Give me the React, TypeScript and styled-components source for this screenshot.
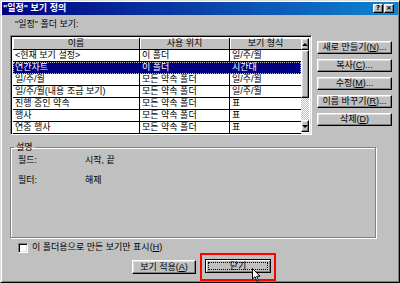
import React from 'react';
import styled, { createGlobalStyle, css } from 'styled-components';

const GlobalStyle = createGlobalStyle`
  html, body {
    margin: 0;
    padding: 0;
    background: #c0c0c0;
  }
  body {
    font-family: "Liberation Sans", "Noto Sans CJK KR", sans-serif;
    font-size: 9px;
    color: #000;
  }
  * {
    box-sizing: border-box;
  }
`;

const raised = css`
  background: #c0c0c0;
  border: 1px solid;
  border-color: #fff #000 #000 #fff;
  box-shadow: inset -1px -1px 0 #808080, inset 1px 1px 0 #dfdfdf;
`;

const sunken = css`
  border: 1px solid;
  border-color: #808080 #fff #fff #808080;
  box-shadow: inset 1px 1px 0 #000, inset -1px -1px 0 #dfdfdf;
`;

const columns = [127, 90, 71];

type View = {
  name: string;
  place: string;
  kind: string;
  selected?: boolean;
};

const views: View[] = [
  { name: '<현재 보기 설정>', place: '이 폴더', kind: '일/주/월' },
  { name: '연간차트', place: '이 폴더', kind: '시간대', selected: true },
  { name: '일/주/월', place: '모든 약속 폴더', kind: '일/주/월' },
  { name: '일/주/월(내용 조금 보기)', place: '모든 약속 폴더', kind: '일/주/월' },
  { name: '진행 중인 약속', place: '모든 약속 폴더', kind: '표' },
  { name: '행사', place: '모든 약속 폴더', kind: '표' },
  { name: '연중 행사', place: '모든 약속 폴더', kind: '표' },
];

const Window = styled.div`
  width: 400px;
  height: 283px;
  display: flex;
  flex-direction: column;
  padding: 1px;
  background: #c0c0c0;
  border: 1px solid;
  border-color: #dfdfdf #000 #000 #dfdfdf;
  box-shadow: inset 1px 1px 0 #fff, inset -1px -1px 0 #808080;
`;

const TitleBar = styled.div`
  height: 13px;
  display: flex;
  align-items: center;
  padding: 0 4px 0 1px;
  background: linear-gradient(to right, #000080, #1084d0);
  color: #fff;
`;

const TitleText = styled.span`
  flex: 1;
  font-weight: bold;
  line-height: 13px;
  white-space: nowrap;
`;

const TitleButtons = styled.div`
  display: flex;
  gap: 1px;
`;

const CaptionButton = styled.div`
  ${raised};
  width: 10px;
  height: 9px;
  display: flex;
  align-items: center;
  justify-content: center;
  color: #000;
  font-family: "DejaVu Sans", sans-serif;
  font-weight: bold;
  font-size: 7px;
  line-height: 7px;
`;

const Body = styled.div`
  flex: 1;
  display: flex;
  flex-direction: column;
  padding: 0 6px 0 8px;
`;

const Caption = styled.div`
  margin: 4px 0 0 5px;
  line-height: 11px;
`;

const TopSection = styled.div`
  display: flex;
  gap: 5px;
  margin-top: 5px;
`;

const ListView = styled.div`
  ${sunken};
  width: 302px;
  height: 100px;
  padding: 2px;
  display: flex;
  background: #fff;
`;

const ListArea = styled.div`
  width: 288px;
  display: flex;
  flex-direction: column;
`;

const HeaderRow = styled.div`
  display: flex;
  height: 12px;
  border-bottom: 1px solid #000;
  background: #c0c0c0;
`;

const HeaderCell = styled.div<{ $w: number; $last?: boolean }>`
  width: ${(p) => p.$w}px;
  text-align: center;
  line-height: 11px;
  box-shadow: inset 1px 1px 0 #fff;
  border-right: ${(p) => (p.$last ? 'none' : '1px solid #000')};
`;

const Row = styled.div<{ $selected?: boolean }>`
  display: flex;
  height: 12px;
  border-bottom: 1px solid #000;
  background: ${(p) => (p.$selected ? '#000080' : '#fff')};
  color: ${(p) => (p.$selected ? '#fff' : '#000')};
  outline: ${(p) => (p.$selected ? '1px dotted #c0c0c0' : 'none')};
  outline-offset: -1px;
`;

const Cell = styled.div<{ $w: number; $last?: boolean }>`
  width: ${(p) => p.$w}px;
  padding-left: 2px;
  line-height: 11px;
  white-space: nowrap;
  overflow: hidden;
  border-right: ${(p) => (p.$last ? 'none' : '1px solid #000')};
`;

const ScrollBar = styled.div`
  width: 10px;
  display: flex;
  flex-direction: column;
`;

const ScrollButton = styled.div`
  ${raised};
  height: 12px;
  display: flex;
  align-items: center;
  justify-content: center;
`;

const Arrow = styled.div<{ $down?: boolean }>`
  width: 0;
  height: 0;
  border-left: 3px solid transparent;
  border-right: 3px solid transparent;
  ${(p) =>
    p.$down
      ? 'border-top: 3px solid #000;'
      : 'border-bottom: 3px solid #000;'}
`;

const ScrollThumb = styled.div`
  ${raised};
  height: 48px;
`;

const ScrollTrack = styled.div`
  flex: 1;
  background: repeating-conic-gradient(#fff 0 25%, #c0c0c0 0 50%) 0 0 / 2px 2px;
`;

const SideButtons = styled.div`
  display: flex;
  flex-direction: column;
  gap: 5px;
  padding-top: 6px;
`;

const PushButton = styled.div<{ $w: number; $h: number; $default?: boolean }>`
  ${raised};
  width: ${(p) => p.$w}px;
  height: ${(p) => p.$h}px;
  display: flex;
  align-items: center;
  justify-content: center;
  white-space: nowrap;
  line-height: 11px;
  ${(p) =>
    p.$default &&
    css`
      border-color: #000;
      box-shadow: inset 1px 1px 0 #fff, inset -1px -1px 0 #808080;
      outline: 1px dotted #000;
      outline-offset: -4px;
    `}
`;

const GroupBox = styled.fieldset`
  margin: 7px 0 0 0;
  padding: 0;
  width: 366px;
  height: 96px;
  min-width: 0;
  border: 1px solid #808080;
  box-shadow: inset 1px 1px 0 #fff, 1px 1px 0 #fff;
`;

const Legend = styled.legend`
  margin-left: 3px;
  padding: 0 2px;
  line-height: 11px;
`;

const InfoGrid = styled.div`
  display: grid;
  grid-template-columns: 67px auto;
  row-gap: 9px;
  padding: 2px 0 0 7px;
  line-height: 11px;
`;

const CheckRow = styled.div`
  display: flex;
  align-items: center;
  gap: 4px;
  height: 11px;
  margin: 4px 0 0 8px;
  line-height: 11px;
`;

const CheckBox = styled.div`
  ${sunken};
  width: 10px;
  height: 10px;
  background: #fff;
`;

const ActionRow = styled.div`
  display: flex;
  align-items: center;
  gap: 4px;
  height: 28px;
  padding-left: 122px;
`;

const Highlight = styled.div`
  position: relative;
  border: 2px solid #ff0000;
  padding: 4px 3px 6px;
`;

const Cursor = styled.svg`
  position: absolute;
  left: 50px;
  top: 13px;
`;

const App: React.FC = (): JSX.Element => {
  return (
    <>
      <GlobalStyle />
      <Window>
        <TitleBar>
          <TitleText>"일정" 보기 정의</TitleText>
          <TitleButtons>
            <CaptionButton>?</CaptionButton>
            <CaptionButton>×</CaptionButton>
          </TitleButtons>
        </TitleBar>
        <Body>
          <Caption>"일정" 폴더 보기:</Caption>
          <TopSection>
            <ListView>
              <ListArea>
                <HeaderRow>
                  <HeaderCell $w={columns[0]}>이름</HeaderCell>
                  <HeaderCell $w={columns[1]}>사용 위치</HeaderCell>
                  <HeaderCell $w={columns[2]} $last>보기 형식</HeaderCell>
                </HeaderRow>
                {views.map((v) => (
                  <Row key={v.name + v.kind} $selected={v.selected}>
                    <Cell $w={columns[0]}>{v.name}</Cell>
                    <Cell $w={columns[1]}>{v.place}</Cell>
                    <Cell $w={columns[2]} $last>{v.kind}</Cell>
                  </Row>
                ))}
              </ListArea>
              <ScrollBar>
                <ScrollButton>
                  <Arrow />
                </ScrollButton>
                <ScrollThumb />
                <ScrollTrack />
                <ScrollButton>
                  <Arrow $down />
                </ScrollButton>
              </ScrollBar>
            </ListView>
            <SideButtons>
              <PushButton $w={75} $h={13}>새로 만들기(<u>N</u>)...</PushButton>
              <PushButton $w={75} $h={13}>복사(<u>C</u>)...</PushButton>
              <PushButton $w={75} $h={13}>수정(<u>M</u>)...</PushButton>
              <PushButton $w={75} $h={13}>이름 바꾸기(<u>R</u>)...</PushButton>
              <PushButton $w={75} $h={13}>삭제(<u>D</u>)</PushButton>
            </SideButtons>
          </TopSection>
          <GroupBox>
            <Legend>설명</Legend>
            <InfoGrid>
              <span>필드:</span>
              <span>시작, 끝</span>
              <span>필터:</span>
              <span>해제</span>
            </InfoGrid>
          </GroupBox>
          <CheckRow>
            <CheckBox />
            <span>이 폴더용으로 만든 보기만 표시(<u>H</u>)</span>
          </CheckRow>
          <ActionRow>
            <PushButton $w={64} $h={14}>보기 적용(<u>A</u>)</PushButton>
            <Highlight>
              <PushButton $w={66} $h={14} $default>닫기</PushButton>
              <Cursor width="9" height="14" viewBox="0 0 9 14">
                <path
                  d="M0.5 0.5 L0.5 11 L3 8.7 L5 13.3 L6.6 12.6 L4.7 8.2 L8 8.2 Z"
                  fill="#fff"
                  stroke="#000"
                  strokeWidth="1"
                />
              </Cursor>
            </Highlight>
          </ActionRow>
        </Body>
      </Window>
    </>
  );
};

export default App;
